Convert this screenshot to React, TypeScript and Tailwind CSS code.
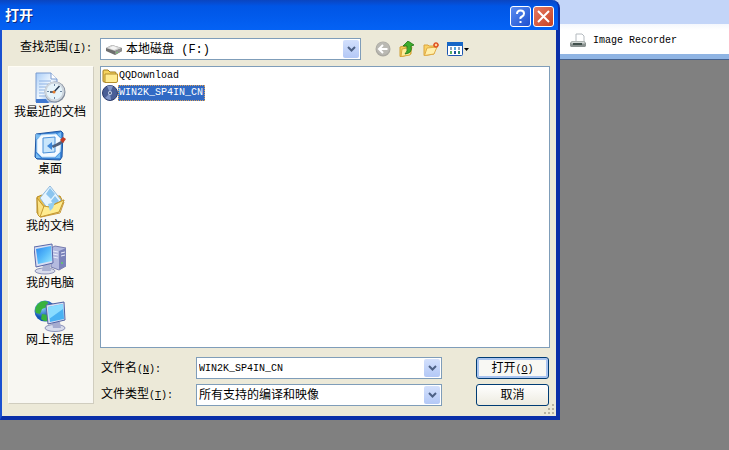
import React from "react";

const cjk = "font-['Liberation_Mono','Noto_Sans_CJK_SC',sans-serif]";

function Latin({ children }: { children: React.ReactNode }) {
  return <span className="text-[10px]">{children}</span>;
}

function Key({ letter, colon }: { letter: string; colon?: boolean }) {
  return (
    <Latin>
      (<u>{letter}</u>){colon && ":"}
    </Latin>
  );
}

function RecentIcon() {
  return (
    <svg width="32" height="32" viewBox="0 0 32 32">
      <defs>
        <linearGradient id="page" x1="0" y1="0" x2="1" y2="1">
          <stop offset="0" stopColor="#a9cdf8" />
          <stop offset=".5" stopColor="#f0f8ff" />
          <stop offset="1" stopColor="#6d9de2" />
        </linearGradient>
      </defs>
      <path d="M2 1h15l6 6v23H2z" fill="url(#page)" stroke="#7b9bcf" />
      <path d="M17 1v6h6" fill="#fff" stroke="#7b9bcf" />
      <path d="M5 9h12M5 12h10M5 15h7M5 18h6M5 21h5M5 24h6" stroke="#8db2e4" />
      <path d="M2 27h10l3 4H2z" fill="#3f78d0" />
      <circle cx="21" cy="20" r="10.500" fill="#808b9b" />
      <circle cx="20.500" cy="19.500" r="9" fill="#e6f4fb" stroke="#ccd4dc" strokeWidth="2" />
      <path d="M20.500 12v2M20.500 25v2M13 19.500h2M26 19.500h2" stroke="#7189a4" />
      <path d="M25.500 14L20 20h-4" fill="none" stroke="#2b3f57" strokeWidth="1.500" />
      <circle cx="20" cy="20" r="1.500" fill="#e57c2c" />
    </svg>
  );
}

function DesktopIcon() {
  return (
    <svg width="32" height="32" viewBox="0 0 32 32">
      <path d="M2 5l25-3 2 2-1 24-2 3-23-1-2-2z" fill="#3c86d8" stroke="#1f57a4" />
      <path d="M7 6l15-1 5 5-1 13-5 5H8l-5-5V11z" fill="#f4faff" stroke="#b9dcf8" />
      <path d="M2 5l5 1-5 5zM27 3v6l-4-4zM2 24l5 5H2zM26 24v5h-5z" fill="#79bdf3" />
      <path d="M9 9l12-1v15l-12 1z" fill="#c9e6fb" stroke="#4b90d8" />
      <path d="M22 15l-4 1v-3l-5 4 5 4v-3l4-1z" fill="#3d86d8" />
      <path d="M18 17l7-4 4-2 1 2-4 3-7 3z" fill="#51607a" />
      <path d="M26 11l3-3 3 2-3 4z" fill="#c43b25" />
    </svg>
  );
}

function DocumentsIcon() {
  return (
    <svg width="32" height="32" viewBox="0 0 32 32">
      <path d="M3 11l5-2 3 2 15-1 3 6-22 14-4-3z" fill="#eabf48" stroke="#b98a20" />
      <path d="M6 12L16 0l11 14-11 12z" fill="#e4f4ff" stroke="#8fb9dd" />
      <path d="M16 2l5 6-4 5-5-5zM21 10l4 5-4 5-4-5z" fill="#8bc5ef" />
      <path d="M3 12l8 10 19-8-5 12-19 5-2-2z" fill="#fbe285" stroke="#bd9530" />
      <path d="M10 20l5 1 15-7-5 12-19 5z" fill="#ffec90" stroke="#c59b33" />
      <path d="M7 31l19-4 4-11" fill="none" stroke="#c99a38" />
      <path d="M14 18l7-2-2 6-3 3z" fill="#94cef1" />
    </svg>
  );
}

function ComputerIcon() {
  return (
    <svg width="32" height="32" viewBox="0 0 32 32">
      <defs>
        <linearGradient id="screen" x1="0" y1="0" x2="1" y2="1">
          <stop offset="0" stopColor="#2a86ee" />
          <stop offset=".5" stopColor="#55b9fa" />
          <stop offset="1" stopColor="#9bebff" />
        </linearGradient>
      </defs>
      <path d="M17 5l4-2 11 2v18l-7 4-8-3z" fill="#b4badf" stroke="#777cae" />
      <path d="M25 8l7-3v18l-7 4z" fill="#7b83ba" />
      <path d="M19 8l5 1M19 11l5 1M19 14l5 1M27 10l4-1M27 13l4-1" stroke="#e9ecfb" />
      <circle cx="28" cy="20" r="1" fill="#5fcf60" />
      <ellipse cx="11" cy="28" rx="10" ry="3" fill="#d8dcec" stroke="#8b91b8" />
      <path d="M9 21h7l1 7H8z" fill="#aab1d1" />
      <path d="M0 4l18-3 1 19-17 4z" fill="#d8def2" stroke="#5967a8" />
      <path d="M2 6l15-3 1 15-14 3z" fill="url(#screen)" />
    </svg>
  );
}

function NetworkIcon() {
  return (
    <svg width="32" height="32" viewBox="0 0 32 32">
      <defs>
        <radialGradient id="globe" cx=".35" cy=".3">
          <stop offset="0" stopColor="#9fe0ff" />
          <stop offset="1" stopColor="#1457b8" />
        </radialGradient>
      </defs>
      <circle cx="11" cy="11" r="10.500" fill="url(#globe)" />
      <path d="M3 5q5-6 11-3l-1 5-5 2-2 5-4-1q-2-4 1-8zM8 14l6 1 1 6q-5 1-8-2z" fill="#38b23e" />
      <ellipse cx="21" cy="28" rx="10" ry="3.500" fill="#d8dcec" stroke="#8b91b8" />
      <path d="M18 22h8l1 6h-8z" fill="#a5acd0" />
      <path d="M12 5l18-3 1 18-17 4z" fill="#d8def2" stroke="#5061a2" />
      <path d="M14 7l15-3 1 15-14 3z" fill="#4ab2f3" />
      <path d="M14 7l15-3v5L15 19z" fill="#8adcff" />
    </svg>
  );
}

function FolderIcon() {
  return (
    <svg width="16" height="16" viewBox="0 0 16 16">
      <path d="M1 3q0-1 1-1h4l2 2h5q1 0 1 1v9H2q-1 0-1-1z" fill="#f5d35f" stroke="#a27d20" />
      <path d="M3 6h12.500v7q0 1.500-1.500 1.500H3z" fill="#ffeb92" stroke="#b48e2d" />
    </svg>
  );
}

function DiscIcon() {
  return (
    <svg width="16" height="16" viewBox="0 0 16 16">
      <circle cx="8" cy="8" r="7.500" fill="#4a5f96" stroke="#2b3a6b" />
      <path d="M8 8L5 1q3-1 6 0zM8 8l-5 5q3 2 6 2z" fill="#7f95c8" />
      <circle cx="8" cy="8" r="2" fill="#c8d2e8" />
      <circle cx="8" cy="8" r="1" fill="#33466f" />
    </svg>
  );
}

function DriveIcon() {
  return (
    <svg width="16" height="16" viewBox="0 0 16 16">
      <path d="M0 7l6-3 10 3v3l-7 4-9-4z" fill="#6f6f6f" />
      <path d="M0 7l6-3 10 3-7 3z" fill="#cfcfcf" />
      <path d="M3 7l4-2 5 2-4 2z" fill="#f4f4f4" />
      <path d="M9 10l7-3v3l-7 4z" fill="#8f8f8f" />
      <path d="M10 12l2-1" stroke="#70d070" />
    </svg>
  );
}

function PrinterIcon() {
  return (
    <svg width="16" height="16" viewBox="0 0 16 16">
      <path d="M6 9V1h6l2 2v6z" fill="#fff" stroke="#b4babf" />
      <path d="M2 8h12l2 2v3l-1 1H1l-1-1v-3z" fill="#8a9290" />
      <path d="M2 8.500h12l1 2H1z" fill="#d1d6d4" />
      <path d="M3 10h9v2H3z" fill="#41504c" />
    </svg>
  );
}

function BackIcon() {
  return (
    <svg width="16" height="16" viewBox="0 0 16 16">
      <circle cx="8" cy="8" r="7.500" fill="#aaa9a2" />
      <circle cx="8" cy="7.500" r="6.500" fill="#bab9b3" />
      <path d="M12.500 8H4.500M8 4L4 8l4 4" fill="none" stroke="#fff" strokeWidth="2" />
    </svg>
  );
}

function UpIcon() {
  return (
    <svg width="16" height="16" viewBox="0 0 16 16">
      <path d="M1 6l4-1 1 1 6-1v8l-9 2.500H1z" fill="#f3cd58" stroke="#cf9f35" />
      <path d="M3 8l10-2-2 8-9 1.500z" fill="#ffed9a" stroke="#d8a83c" />
      <path d="M6 13q3-2 2-8H4l5-5 6 4-3 1q2 7-6 8z" fill="#3dad2c" stroke="#1c7414" strokeWidth=".8" />
    </svg>
  );
}

function NewFolderIcon() {
  return (
    <svg width="16" height="16" viewBox="0 0 16 16">
      <path d="M1 4h4l1 1h5v8l-9 1.500H1z" fill="#f9d266" stroke="#dba43e" />
      <path d="M4 7l10-1-3 7-9.500 1.500z" fill="#ffefac" stroke="#e0ac48" />
      <path d="M13 1v6M10 4h6M11 2l4 4M15 2l-4 4" stroke="#e05020" strokeWidth="1.300" />
      <circle cx="13" cy="4" r="1.200" fill="#ffd59b" />
    </svg>
  );
}

function ViewsIcon() {
  return (
    <svg width="22" height="16" viewBox="0 0 22 16">
      <rect x=".5" y="1.500" width="15" height="13" rx="1" fill="#fff" stroke="#1d56b0" />
      <path d="M0 1h16v4H0z" fill="#1767c6" />
      <path d="M3 6h2v3H3zM11 6h2v3h-2z" fill="#8ea2bb" />
      <path d="M7 6h2v3H7z" fill="#51a6e0" />
      <path d="M3 10h2v3H3z" fill="#55ad60" />
      <path d="M7 10h2v3H7z" fill="#1b4f9f" />
      <path d="M11 10h2v3h-2z" fill="#2b8b6c" />
      <path d="M17 7h5l-2.500 3z" fill="#000" />
    </svg>
  );
}

function Arrow() {
  return (
    <span className="flex h-full w-4 items-center justify-center rounded-xs bg-linear-to-b from-[#d3e0fc] to-[#b3c8f6]">
      <svg width="9" height="7" viewBox="0 0 9 7">
        <path d="M1 1l3.500 3.500L8 1" fill="none" stroke="#4d6185" strokeWidth="2" />
      </svg>
    </span>
  );
}

const places = [
  { name: "我最近的文档", icon: <RecentIcon /> },
  { name: "桌面", icon: <DesktopIcon /> },
  { name: "我的文档", icon: <DocumentsIcon /> },
  { name: "我的电脑", icon: <ComputerIcon /> },
  { name: "网上邻居", icon: <NetworkIcon /> },
];

const tools = [
  { name: "后退", icon: <BackIcon /> },
  { name: "向上一级", icon: <UpIcon /> },
  { name: "新建文件夹", icon: <NewFolderIcon /> },
  { name: "查看", icon: <ViewsIcon /> },
];

function TitleBar() {
  return (
    <header className="flex h-[30px] items-start justify-between rounded-tr-lg border-r-2 border-[#0a2fa8] bg-linear-to-b from-[#0a45c0] via-[#0055e5] via-20% to-[#0462f5] pt-[6px] pr-1 pl-[5px]">
      <h1 className="text-[14px] leading-5 font-bold text-white [text-shadow:1px_1px_#0a2a80]">打开</h1>
      <div className="flex gap-[2px]">
        <button aria-label="帮助" className="flex size-[21px] items-center justify-center rounded-[3px] border border-white bg-linear-to-br from-[#5b8cf0] to-[#1c4fd0]">
          <svg width="13" height="15" viewBox="0 0 13 15">
            <path d="M3 5q0-3.500 3.500-3.500T10 4.500q0 2-2 3T6.500 10" fill="none" stroke="#fff" strokeWidth="2" />
            <path d="M5.500 12h2v2h-2z" fill="#fff" />
          </svg>
        </button>
        <button aria-label="关闭" className="flex size-[21px] items-center justify-center rounded-[3px] border border-white bg-linear-to-br from-[#e57a62] to-[#c8401f]">
          <svg width="13" height="13" viewBox="0 0 13 13">
            <path d="M1 1l11 11M12 1L1 12" stroke="#fff" strokeWidth="2" />
          </svg>
        </button>
      </div>
    </header>
  );
}

function OpenDialog() {
  return (
    <section role="dialog" aria-label="打开" className="absolute top-0 right-[169px] left-0">
      <TitleBar />
      <div className="relative border-r-4 border-b-4 border-l-2 border-r-[#0a2fa8] border-b-[#0a2fa8] border-l-[#1a50d0] bg-[#ece9d8] px-[6px] pt-2 pb-[10px]">
        <div className="flex items-center">
          <label htmlFor="folder" className="w-[86px] pr-[2px] pb-[2px] text-right">
            查找范围<Key letter="I" colon />
          </label>
          <div className="relative ml-[6px] flex h-[22px] flex-1 items-center border border-[#7f9db9] bg-white p-px">
            <span className="absolute left-[5px]"><DriveIcon /></span>
            <select id="folder" className="h-full w-full appearance-none pt-[2px] pl-6 leading-4 outline-none">
              <option>本地磁盘 (F:)</option>
            </select>
            <span className="pointer-events-none absolute inset-y-px right-px"><Arrow /></span>
          </div>
          <div className="ml-[14px] flex w-[175px] gap-2">
            {tools.map((tool) => (
              <button key={tool.name} aria-label={tool.name}>{tool.icon}</button>
            ))}
          </div>
        </div>

        <div className="mt-[6px] flex gap-[6px]">
          <nav className="mb-[2px] flex w-[86px] flex-col items-center gap-2 border border-[#fffdf5] border-r-[#d0cdbf] border-b-[#d0cdbf] bg-[#f8f7f2] pt-[5px] pr-[2px]">
            {places.map((place) => (
              <button key={place.name} className="flex flex-col items-center gap-px leading-4 whitespace-nowrap">
                {place.icon}
                {place.name}
              </button>
            ))}
          </nav>

          <div className="min-w-0 flex-1">
            <ul className="h-[282px] border border-[#7f9db9] bg-white pt-px pl-px leading-4">
              <li>
                <button className="flex h-4 items-center gap-px">
                  <FolderIcon />
                  <Latin>QQDownload</Latin>
                </button>
              </li>
              <li>
                <button className="flex h-[17px] items-center">
                  <DiscIcon />
                  <span className="border border-dotted border-[#d9a05a] bg-[#316ac5] pr-px text-[10px] leading-[14px] text-white">WIN2K_SP4IN_CN</span>
                </button>
              </li>
            </ul>

            <form className="mt-[9px] flex items-start pr-px" onSubmit={(e) => e.preventDefault()}>
              <div className="flex flex-1 flex-col gap-[5px]">
                <div className="flex items-center">
                  <label htmlFor="file" className="w-24 pt-[2px] pl-px">
                    文件名<Key letter="N" colon />
                  </label>
                  <div className="flex h-[22px] min-w-0 flex-1 border border-[#7f9db9] bg-white p-px">
                    <input id="file" defaultValue="WIN2K_SP4IN_CN" className="min-w-0 flex-1 pt-[2px] pl-px text-[10px] outline-none" />
                    <button type="button" aria-label="文件名列表"><Arrow /></button>
                  </div>
                </div>
                <div className="flex items-center">
                  <label htmlFor="type" className="w-24 pl-px">
                    文件类型<Key letter="T" colon />
                  </label>
                  <div className="relative flex h-[22px] min-w-0 flex-1 border border-[#7f9db9] bg-white p-px">
                    <select id="type" className="w-full appearance-none pt-[2px] pl-px leading-4 outline-none">
                      <option>所有支持的编译和映像</option>
                    </select>
                    <span className="pointer-events-none absolute inset-y-px right-px"><Arrow /></span>
                  </div>
                </div>
              </div>
              <div className="ml-[34px] flex w-[73px] flex-col gap-[5px]">
                <button className="h-[22px] rounded-[3px] border border-[#003c74] bg-[#f8f8f4] pt-[2px] leading-4 shadow-[inset_0_0_0_2px_#a9c4f0]">
                  打开<Key letter="O" />
                </button>
                <button type="button" className="h-[22px] rounded-[3px] border border-[#003c74] bg-linear-to-b from-white to-[#edebe0] pt-[2px] leading-4">取消</button>
              </div>
            </form>
          </div>
        </div>

        <svg className="absolute right-px bottom-px" width="11" height="11" viewBox="0 0 11 11">
          <path d="M8 0h2v2H8zM4 4h2v2H4zM8 4h2v2H8zM0 8h2v2H0zM4 8h2v2H4zM8 8h2v2H8z" fill="#b8b4a2" />
        </svg>
      </div>
    </section>
  );
}

function App() {
  return (
    <main className={`relative min-h-screen bg-[#808080] text-[12px] leading-4 text-black ${cjk}`}>
      <div className="h-6 bg-[#c3d5f8]" />
      <div className="flex h-[30px] justify-end bg-linear-to-b from-[#f4f7fd] to-white to-20%">
        <div className="flex w-[169px] items-center gap-[7px] pt-1 pl-[10px]">
          <PrinterIcon />
          <Latin>Image Recorder</Latin>
        </div>
      </div>
      <div className="h-[6px] border-b border-[#45618c] bg-[#8fb4e3]" />
      <OpenDialog />
    </main>
  );
}

export default App;
